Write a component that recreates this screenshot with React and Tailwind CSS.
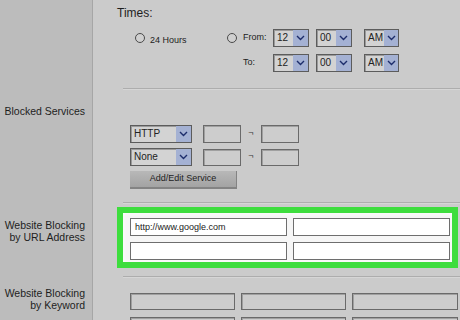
import React from "react";

const Chevron = () => (
  <svg width="9" height="6" viewBox="0 0 9 6">
    <polyline points="1,1 4.5,4.5 8,1" fill="none" stroke="#1d2d6b" strokeWidth="1.4" />
  </svg>
);

function Select({ w, value, arrowW = "w-[15px]" }) {
  return (
    <div className={`${w} h-[18px] flex border border-[#5c5c5c] bg-[#d3d3d3] shadow-[inset_1px_1px_0_#9a9a9a]`}>
      <div className="flex-1 pl-[3px] flex items-center text-[10px] text-[#222] leading-none overflow-hidden">{value}</div>
      <div className={`${arrowW} bg-[#a4b1d3] flex items-center justify-center shrink-0`}>
        <Chevron />
      </div>
    </div>
  );
}

const Radio = () => (
  <div className="w-[10px] h-[10px] rounded-full border border-[#4a4a4a] bg-[#d0d0d0]" />
);

const Box = ({ w, h = "h-[18px]" }) => (
  <div className={`${w} ${h} border border-[#6a6a6a] bg-[#cdcdcd] shadow-[inset_1px_1px_0_#a0a0a0]`} />
);

const WhiteInput = ({ children }) => (
  <div className="w-[157px] h-[18px] shrink-0 border border-[#6e6e6e] bg-white flex items-center pl-[4px] text-[9px] text-[#222] leading-none">
    {children}
  </div>
);

const Line = () => <div className="ml-[30px] h-[2px] bg-[#adadad] border-b border-[#d6d6d6]" />;

const Label = ({ children, pt }) => (
  <div className={`bg-[#bcbcbc] border-r border-[#a6a6a6] text-right pr-[7px] text-[10.5px] leading-[11.5px] text-[#1e1e1e] ${pt}`}>
    {children}
  </div>
);

export default function App() {
  return (
    <div
      className="w-[460px] h-[320px] overflow-hidden bg-[#cbcbcb] grid grid-cols-[93px_367px] grid-rows-[88px_114px_74px_1fr]"
      style={{ fontFamily: '"Liberation Sans", Arial, sans-serif' }}
    >
      {/* Row 1 */}
      <Label pt="pt-0" />
      <div>
        <div className="pl-[24px] pt-[6px] text-[12px] leading-[14px] text-[#1e1e1e]">Times:</div>
        <div className="pl-[42px] mt-[9px] flex items-center h-[18px] text-[9px] text-[#222]">
          <div className="w-[92px] flex items-center">
            <Radio />
            <span className="ml-[5px] mt-[5px]">24 Hours</span>
          </div>
          <Radio />
          <span className="ml-[6px] w-[30px]">From:</span>
          <Select w="w-[36px]" value="12" />
          <div className="w-[7px]" />
          <Select w="w-[36px]" value="00" />
          <div className="w-[12px]" />
          <Select w="w-[35px]" value="AM" arrowW="w-[14px]" />
        </div>
        <div className="pl-[150px] mt-[7px] flex items-center h-[18px] text-[9px] text-[#222]">
          <span className="w-[30px]">To:</span>
          <Select w="w-[36px]" value="12" />
          <div className="w-[7px]" />
          <Select w="w-[36px]" value="00" />
          <div className="w-[12px]" />
          <Select w="w-[35px]" value="AM" arrowW="w-[14px]" />
        </div>
      </div>

      {/* Row 2 */}
      <Label pt="pt-[18px]">Blocked Services</Label>
      <div>
        <Line />
        <div className="pl-[37px] mt-[35px] flex flex-col gap-[5px]">
          <div className="flex items-center">
            <Select w="w-[62px]" value="HTTP" />
            <div className="w-[11px]" />
            <Box w="w-[38px]" />
            <span className="w-[20px] text-center text-[9px] text-[#333]">¬</span>
            <Box w="w-[38px]" />
          </div>
          <div className="flex items-center">
            <Select w="w-[62px]" value="None" />
            <div className="w-[11px]" />
            <Box w="w-[38px]" h="h-[17px]" />
            <span className="w-[20px] text-center text-[9px] text-[#333]">¬</span>
            <Box w="w-[38px]" h="h-[17px]" />
          </div>
          <div className="w-[107px] h-[18px] bg-gradient-to-b from-[#b8b8b8] to-[#a3a3a3] border-b-2 border-r border-[#838383] flex items-center justify-center text-[9px] text-[#222]">
            Add/Edit Service
          </div>
        </div>
      </div>

      {/* Row 3 */}
      <Label pt="pt-[18px]">
        Website Blocking
        <br />
        by URL Address
      </Label>
      <div>
        <Line />
        <div className="ml-[24px] mt-[3px] w-[341px] h-[61px] border-[6px] border-[#3ddd3d] bg-[#f6f6f6] shadow-[inset_0_0_4px_#ffffff] pl-[7px] pt-[5px] flex flex-col gap-[6px]">
          <div className="flex gap-[6px]">
            <WhiteInput>http://www.google.com</WhiteInput>
            <WhiteInput />
          </div>
          <div className="flex gap-[6px]">
            <WhiteInput />
            <WhiteInput />
          </div>
        </div>
      </div>

      {/* Row 4 */}
      <Label pt="pt-[12px]">
        Website Blocking
        <br />
        by Keyword
      </Label>
      <div>
        <Line />
        <div className="pl-[37px] mt-[15px] flex flex-col gap-[7px]">
          <div className="flex gap-[6px]">
            <Box w="w-[105px]" h="h-[17px]" />
            <Box w="w-[105px]" h="h-[17px]" />
            <Box w="w-[106px]" h="h-[17px]" />
          </div>
          <div className="flex gap-[6px]">
            <Box w="w-[105px]" h="h-[17px]" />
            <Box w="w-[105px]" h="h-[17px]" />
            <Box w="w-[106px]" h="h-[17px]" />
          </div>
        </div>
      </div>
    </div>
  );
}
